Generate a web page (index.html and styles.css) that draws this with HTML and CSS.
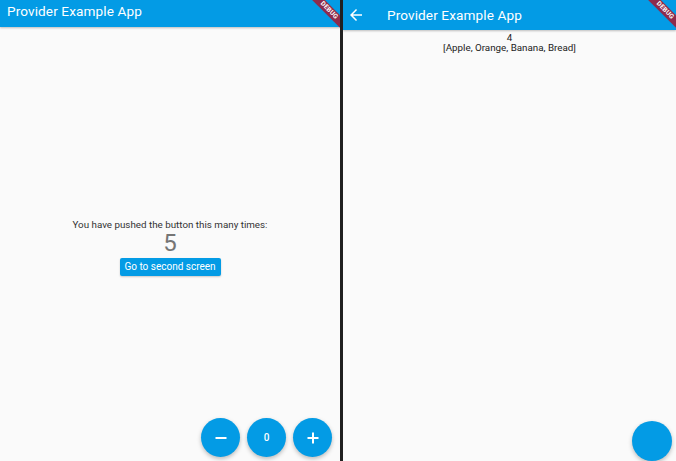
FILE: index.html
```html
<!DOCTYPE html>
<html>
<head>
<meta charset="utf-8">
<link rel="stylesheet" href="styles.css">
</head>
<body>
<div class="screens">
  <section class="screen screen-home">
    <header class="appbar appbar-home">
      <span class="title">Provider Example App</span>
    </header>
    <main class="home-body">
      <p class="caption">You have pushed the button this many times:</p>
      <p class="count">5</p>
      <button class="btn">Go to second screen</button>
    </main>
    <div class="fab-row">
      <button class="fab" aria-label="decrement">
        <svg width="14" height="14" viewBox="0 0 14 14"><rect x="1.5" y="6" width="11" height="2" fill="#fff"/></svg>
      </button>
      <button class="fab fab-text">0</button>
      <button class="fab" aria-label="increment">
        <svg width="14" height="14" viewBox="0 0 14 14"><rect x="1.5" y="6" width="11" height="2" fill="#fff"/><rect x="6" y="1.5" width="2" height="11" fill="#fff"/></svg>
      </button>
    </div>
    <div class="banner"><span class="ribbon">DEBUG</span></div>
  </section>
  <div class="divider"></div>
  <section class="screen screen-second">
    <header class="appbar appbar-second">
      <svg class="back" width="18" height="18" viewBox="0 0 24 24"><path d="M20 11H7.83l5.59-5.59L12 4l-8 8 8 8 1.41-1.41L7.83 13H20v-2z" fill="#fff"/></svg>
      <span class="title">Provider Example App</span>
    </header>
    <main class="second-body">
      <p class="line">4</p>
      <p class="line">[Apple, Orange, Banana, Bread]</p>
    </main>
    <button class="fab fab-single" aria-label="action"></button>
    <div class="banner"><span class="ribbon">DEBUG</span></div>
  </section>
</div>
</body>
</html>
```
FILE: styles.css
```css
* { box-sizing: border-box; }
html, body { margin: 0; padding: 0; }
body {
  width: 676px;
  height: 461px;
  overflow: hidden;
  font-family: Roboto, "Liberation Sans", sans-serif;
  background: #fafafa;
}
.screens {
  display: flex;
  height: 461px;
}
.screen {
  position: relative;
  display: flex;
  flex-direction: column;
  background: #fafafa;
  overflow: hidden;
}
.screen-home { width: 340px; }
.screen-second { flex: 1; }
.divider {
  width: 3px;
  background: #202020;
}
.appbar {
  display: flex;
  align-items: center;
  background: #039be5;
  color: #fff;
  box-shadow: 0 1px 2px rgba(0,0,0,0.25);
  position: relative;
  z-index: 1;
  flex: none;
}
.appbar-home {
  height: 27px;
  padding: 0 0 6px 7px;
}
.appbar-second {
  height: 30px;
  padding: 0 0 0 4px;
}
.title {
  font-size: 13.6px;
  letter-spacing: 0.1px;
}
.back { margin-right: 22px; }
.home-body {
  flex: 1;
  display: flex;
  flex-direction: column;
  align-items: center;
  justify-content: center;
  padding-top: 5px;
}
.caption {
  margin: 0;
  font-size: 9.8px;
  color: #333;
  line-height: 13px;
}
.count {
  margin: 0;
  font-size: 24px;
  line-height: 24px;
  color: #757575;
}
.btn {
  margin-top: 3px;
  border: none;
  background: #039be5;
  color: #fff;
  font-family: inherit;
  font-size: 10px;
  height: 18px;
  width: 101px;
  padding: 0;
  border-radius: 2px;
  box-shadow: 0 1px 2px rgba(0,0,0,0.2);
}
.second-body {
  display: flex;
  flex-direction: column;
  align-items: center;
  padding-top: 3px;
}
.line {
  margin: 0;
  font-size: 9.8px;
  line-height: 10px;
  color: #222;
}
.fab-row {
  position: absolute;
  right: 8px;
  bottom: 4px;
  display: flex;
  gap: 7px;
}
.fab {
  width: 39px;
  height: 39px;
  border-radius: 50%;
  border: none;
  padding: 0;
  background: #039be5;
  color: #fff;
  display: flex;
  align-items: center;
  justify-content: center;
  box-shadow: 0 2px 4px rgba(0,0,0,0.25);
}
.fab-text {
  font-family: inherit;
  font-size: 10px;
  font-weight: 500;
}
.fab-single {
  position: absolute;
  right: 4px;
  bottom: 0px;
  width: 40px;
  height: 40px;
}
.banner {
  position: absolute;
  top: 0;
  right: 0;
  width: 40px;
  height: 40px;
  overflow: hidden;
  z-index: 2;
  pointer-events: none;
}
.ribbon {
  position: absolute;
  top: 6px;
  right: -19px;
  width: 60px;
  height: 9px;
  transform: rotate(45deg);
  background: #8e2b4c;
  color: #fff;
  font-size: 6.5px;
  font-weight: 700;
  line-height: 9px;
  text-align: center;
  letter-spacing: 0.2px;
}
```
